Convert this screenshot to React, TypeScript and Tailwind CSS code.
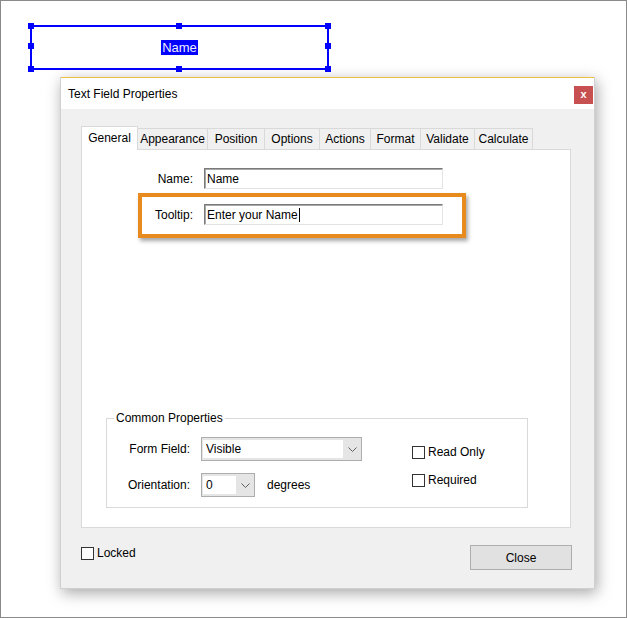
import type { ReactNode } from 'react'

const tabs = [
  { label: 'General', w: 'w-[57px]' },
  { label: 'Appearance', w: 'w-[70px]' },
  { label: 'Position', w: 'w-[57px]' },
  { label: 'Options', w: 'w-[55px]' },
  { label: 'Actions', w: 'w-[51px]' },
  { label: 'Format', w: 'w-[50px]' },
  { label: 'Validate', w: 'w-[54px]' },
  { label: 'Calculate', w: 'w-[58px]' },
]

function Chevron() {
  return (
    <svg width="9" height="5" viewBox="0 0 9 5" className="text-[#606060]">
      <polyline points="0.5,0.5 4.5,4.5 8.5,0.5" fill="none" stroke="currentColor" strokeWidth="1" />
    </svg>
  )
}

function Checkbox({ children }: { children: ReactNode }) {
  return (
    <div className="flex h-[20px] items-center gap-[3px]">
      <span className="h-[13px] w-[13px] border border-[#333] bg-white" />
      <span>{children}</span>
    </div>
  )
}

function TextInput({ value, caret }: { value: string; caret?: boolean }) {
  return (
    <div className="flex h-[21px] w-[239px] items-center border border-t-[#7a7a7a] border-l-[#7a7a7a] border-r-[#e3e3e3] border-b-[#e3e3e3] bg-white pl-[2px] shadow-[inset_1px_1px_0_#a8a8a8]">
      <span>{value}</span>
      {caret && <span className="ml-px h-[14px] w-px bg-black" />}
    </div>
  )
}

function Select({ value, w, inner }: { value: string; w: string; inner: string }) {
  return (
    <div className={`flex h-[24px] ${w} items-stretch border border-[#adadad] bg-[#e5e5e5] py-[2px] pl-px`}>
      <div className={`flex ${inner} items-center bg-white pl-[3px]`}>{value}</div>
      <div className="flex flex-1 items-center justify-center">
        <Chevron />
      </div>
    </div>
  )
}

export default function App() {
  return (
    <div className="relative h-[618px] w-[627px] overflow-hidden border border-[#8a8a8a] bg-white font-['Liberation_Sans',Arial,sans-serif] text-[12px] text-black">
      {/* form field on the page */}
      <div className="absolute left-[29px] top-[24px] flex h-[45px] w-[299px] items-center justify-center border-2 border-[#0000ff]">
        <span className="bg-[#0000ff] px-px text-[13px] leading-[15px] text-[#eef]">Name</span>
        <span className="absolute -left-[4px] -top-[4px] h-[6px] w-[6px] bg-[#0000ff]" />
        <span className="absolute left-[144px] -top-[4px] h-[6px] w-[6px] bg-[#0000ff]" />
        <span className="absolute -right-[4px] -top-[4px] h-[6px] w-[6px] bg-[#0000ff]" />
        <span className="absolute -left-[4px] top-[16px] h-[6px] w-[6px] bg-[#0000ff]" />
        <span className="absolute -right-[4px] top-[16px] h-[6px] w-[6px] bg-[#0000ff]" />
        <span className="absolute -bottom-[4px] -left-[4px] h-[6px] w-[6px] bg-[#0000ff]" />
        <span className="absolute -bottom-[4px] left-[144px] h-[6px] w-[6px] bg-[#0000ff]" />
        <span className="absolute -bottom-[4px] -right-[4px] h-[6px] w-[6px] bg-[#0000ff]" />
      </div>

      {/* dialog */}
      <div className="absolute left-[59px] top-[76px] flex h-[512px] w-[535px] flex-col border-x border-b border-[#d0d0d0] bg-[#f0f0f0] shadow-[2px_4px_14px_rgba(0,0,0,0.35)]">
        <div className="flex h-[32px] items-center justify-between border-t border-[#f0c040] bg-white pl-[7px] pr-px">
          <span>Text Field Properties</span>
          <button className="mt-[2px] flex h-[18px] w-[19px] items-center justify-center bg-[#c75050] text-[11px] font-bold leading-none text-white">
            x
          </button>
        </div>

        <div className="flex flex-1 flex-col pl-[20px] pr-[22px] pt-[17px]">
          <div className="relative z-10 -mb-px flex items-end">
            {tabs.map((t, i) =>
              i === 0 ? (
                <div key={t.label} className={`flex h-[24px] ${t.w} items-center justify-center border border-b-0 border-[#d9d9d9] bg-white pb-[2px]`}>
                  {t.label}
                </div>
              ) : (
                <div key={t.label} className={`flex h-[22px] ${t.w} items-center justify-center border border-l-0 border-[#d9d9d9] bg-[#f0f0f0]`}>
                  {t.label}
                </div>
              ),
            )}
          </div>

          <div className="relative flex h-[379px] w-[490px] flex-col border border-[#d9d9d9] bg-white">
            <div className="flex flex-col gap-[15px] pt-[18px]">
              <div className="flex items-center">
                <span className="w-[111px] text-right">Name:</span>
                <div className="ml-[11px]">
                  <TextInput value="Name" />
                </div>
              </div>
              <div className="flex items-center">
                <span className="w-[111px] text-right">Tooltip:</span>
                <div className="ml-[11px]">
                  <TextInput value="Enter your Name" caret />
                </div>
              </div>
            </div>

            {/* highlight around the tooltip row */}
            <div className="absolute left-[56px] top-[43px] h-[45px] w-[328px] border-4 border-[#e88b1e] shadow-[2px_3px_4px_rgba(0,0,0,0.35)]" />

            <div className="relative mb-[19px] ml-[24px] mt-auto flex h-[90px] w-[422px] border border-[#d9d9d9]">
              <span className="absolute -top-[8px] left-[7px] bg-white px-[2px] leading-[14px]">Common Properties</span>
              <div className="flex flex-col gap-[12px] pt-[18px]">
                <div className="flex items-center">
                  <span className="w-[83px] text-right">Form Field:</span>
                  <div className="ml-[11px]">
                    <Select value="Visible" w="w-[161px]" inner="w-[140px]" />
                  </div>
                </div>
                <div className="flex items-center">
                  <span className="w-[83px] text-right">Orientation:</span>
                  <div className="ml-[11px]">
                    <Select value="0" w="w-[54px]" inner="w-[33px]" />
                  </div>
                  <span className="ml-[12px]">degrees</span>
                </div>
              </div>
              <div className="ml-[50px] flex flex-col gap-[8px] pt-[23px]">
                <Checkbox>Read Only</Checkbox>
                <Checkbox>Required</Checkbox>
              </div>
            </div>
          </div>

          <div className="mt-[17px] flex items-start justify-between">
            <div className="-mt-[2px]">
              <Checkbox>Locked</Checkbox>
            </div>
            <button className="h-[25px] w-[102px] border border-[#adadad] bg-[#e1e1e1]">Close</button>
          </div>
        </div>
      </div>
    </div>
  )
}
